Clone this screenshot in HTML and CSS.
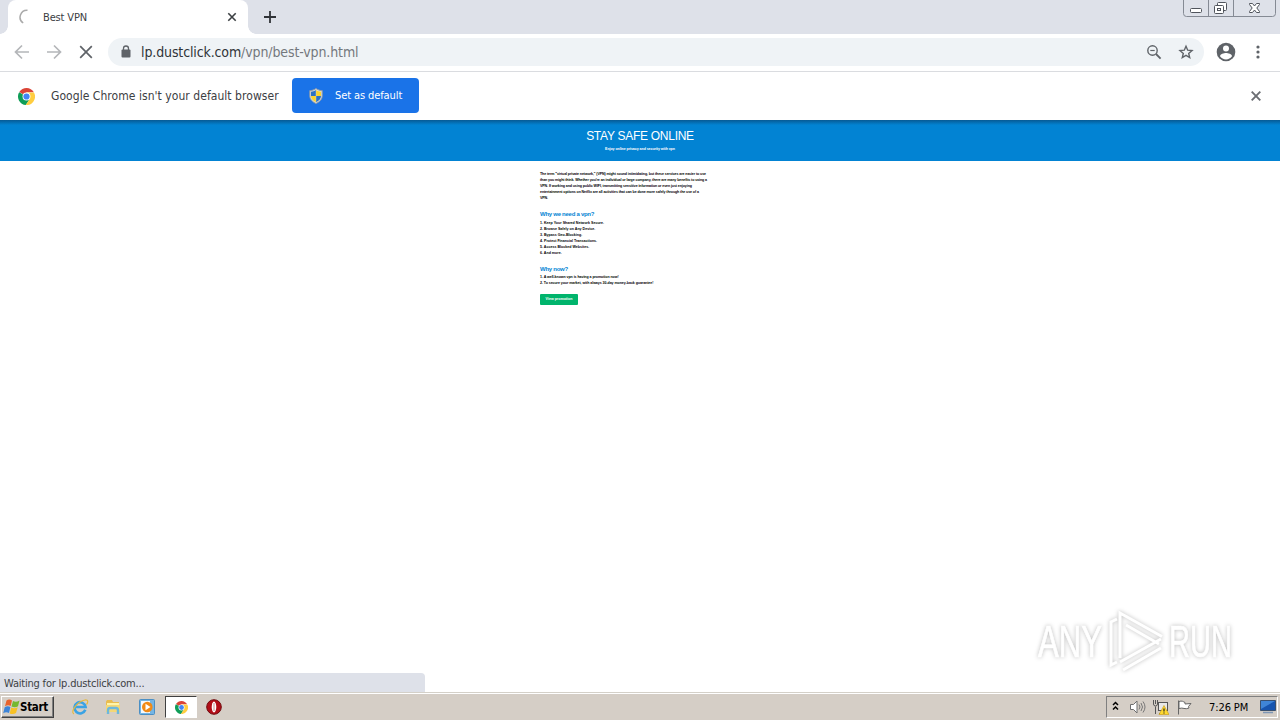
FILE: index.html
```html
<!DOCTYPE html>
<html lang="en">
<head>
    <meta charset="utf-8">
    <title>Best VPN</title>
    <link rel="stylesheet" href="styles.css">
</head>
<body>
    <svg width="0" height="0" class="defs">
        <symbol id="chrome" viewBox="0 0 18 18">
            <path fill="#db4437" d="M9 9 1.4 4.3A9 9 0 0 1 16.8 4.6H9z"/>
            <path fill="#0f9d58" d="M9 9 1.2 4.5A9 9 0 0 0 8.3 18L12.8 11z"/>
            <path fill="#ffcd40" d="M9 4.7h7.9A9 9 0 0 1 8.2 18L12.8 11z"/>
            <circle cx="9" cy="9" r="4.2" fill="#fff"/>
            <circle cx="9" cy="9" r="3.3" fill="#4285f4"/>
        </symbol>
    </svg>

    <div class="tabstrip">
        <div class="tab">
            <svg class="spinner" width="16" height="16" viewBox="0 0 16 16"><path d="M8.5 1.200A7 7 0 0 0 4.200 14" fill="none" stroke="#aaa" stroke-width="1.5"/></svg>
            <span class="tab-title">Best VPN</span>
            <svg width="10" height="10" viewBox="0 0 10 10"><path d="M1.300 1.300l7.400 7.400M8.700 1.300L1.300 8.700" stroke="#3c4043" stroke-width="1.600"/></svg>
        </div>
        <svg class="newtab" width="12" height="12" viewBox="0 0 12 12"><path d="M6 0v12M0 6h12" stroke="#303338" stroke-width="1.800"/></svg>
        <svg class="winbtns" width="94" height="18" viewBox="0 0 94 18">
            <path d="M.5 0v13.5a3 3 0 0 0 3 3h86a3 3 0 0 0 3-3V0M25.500 0v16M50.500 0v16" fill="none" stroke="#858a94"/>
            <rect x="7.500" y="8.500" width="11" height="4" rx="1" fill="#fff" stroke="#50545c"/>
            <rect x="34.500" y="2.500" width="9" height="8" rx="1" fill="#fff" stroke="#50545c"/>
            <rect x="31.500" y="5.500" width="9" height="8" rx="1" fill="#fff" stroke="#50545c"/>
            <rect x="34.500" y="8.500" width="3" height="2" fill="#fff" stroke="#50545c"/>
            <path d="M66.500 3.500h3l2 2.500 2-2.500h3v1L73.800 8l2.700 3.500v1h-3l-2-2.500-2 2.500h-3v-1L69.200 8l-2.700-3.500z" fill="#fff" stroke="#50545c"/>
        </svg>
    </div>

    <div class="toolbar">
        <svg class="nav" width="16" height="16" viewBox="0 0 16 16"><path d="M15 8H2M8 1.500L1.500 8 8 14.500" fill="none" stroke="#b4b6b9" stroke-width="1.700"/></svg>
        <svg class="nav" width="16" height="16" viewBox="0 0 16 16"><path d="M1 8h13M8 1.500L14.500 8 8 14.500" fill="none" stroke="#b4b6b9" stroke-width="1.700"/></svg>
        <svg class="nav" width="16" height="16" viewBox="0 0 16 16"><path d="M2.200 2.200l11.600 11.600M13.800 2.200L2.200 13.800" stroke="#5f6368" stroke-width="1.700"/></svg>
        <div class="omnibox">
            <svg width="10" height="13" viewBox="0 0 10 13"><path d="M2.500 5V3.500a2.500 2.500 0 0 1 5 0V5" fill="none" stroke="#5f6368" stroke-width="1.300"/><rect x=".5" y="4.600" width="9" height="7.900" rx="1" fill="#5f6368"/></svg>
            <span class="url"><b>lp.dustclick.com</b>/vpn/best-vpn.html</span>
            <svg class="zoom" width="16" height="16" viewBox="0 0 16 16"><circle cx="6.500" cy="6.500" r="4.700" fill="none" stroke="#5f6368" stroke-width="1.400"/><path d="M10 10l4.600 4.600" stroke="#5f6368" stroke-width="1.800"/><path d="M4.300 6.500h4.400" stroke="#5f6368" stroke-width="1.200"/></svg>
            <svg width="16" height="16" viewBox="0 0 16 16"><path d="M8 2.200l1.700 4 4.300.4-3.300 2.800 1 4.200L8 11.400l-3.700 2.200 1-4.200L2 6.600l4.300-.4z" fill="none" stroke="#5f6368" stroke-width="1.400"/></svg>
        </div>
        <svg class="avatar" width="20" height="20" viewBox="0 0 20 20"><circle cx="10" cy="10" r="9.300" fill="#5f6368"/><circle cx="10" cy="6.600" r="3" fill="#fff"/><path d="M4 14.200c0-2.100 4-3.200 6-3.200s6 1.100 6 3.200a7.200 7.200 0 0 1-12 0z" fill="#fff"/></svg>
        <svg width="4" height="14" viewBox="0 0 4 14"><g fill="#5f6368"><circle cx="2" cy="2" r="1.600"/><circle cx="2" cy="7" r="1.600"/><circle cx="2" cy="12" r="1.600"/></g></svg>
    </div>

    <div class="infobar">
        <svg class="logo" width="17" height="17"><use href="#chrome"/></svg>
        <span class="info-text">Google Chrome isn't your default browser</span>
        <div class="set-default">
            <svg width="14" height="16" viewBox="0 0 14 16">
                <path d="M7 .5C5 2 3 2.500.8 2.600V8c0 3.500 3 6 6.200 7.500C10.200 14 13.200 11.500 13.200 8V2.600C11 2.500 9 2 7 .5z" fill="#ddd" stroke="#8c9aa8"/>
                <path d="M6.800 2v6H2V3.700C4 3.600 5.500 3 6.800 2zM7.200 8H12c0 3-2.300 4.900-4.800 6.200z" fill="#2c71c4"/>
                <path d="M7.200 2v6H12V3.700C10 3.600 8.500 3 7.200 2zM6.800 8H2c0 3 2.300 4.900 4.800 6.200z" fill="#fbd32e"/>
            </svg>
            <span>Set as default</span>
        </div>
        <svg class="info-close" width="10" height="10" viewBox="0 0 10 10"><path d="M.7.7l8.600 8.600M9.300.7L.7 9.300" stroke="#6b6e73" stroke-width="1.900"/></svg>
    </div>

    <div class="page">
        <div class="hero">
            <h1>STAY SAFE ONLINE</h1>
            <p>Enjoy online privacy and security with vpn</p>
        </div>
        <div class="content">
            <p class="intro">The term "virtual private network," (VPN) might sound intimidating, but these services are easier to use<br>
            than you might think. Whether you're an individual or large company, there are many benefits to using a<br>
            VPN. If working and using public WIFI, transmitting sensitive information or even just enjoying<br>
            entertainment options on Netflix are all activities that can be done more safely through the use of a<br>
            VPN.</p>
            <h2>Why we need a vpn?</h2>
            <p>1. Keep Your Shared Network Secure.<br>
            2. Browse Safely on Any Device.<br>
            3. Bypass Geo-Blocking.<br>
            4. Protect Financial Transactions.<br>
            5. Access Blocked Websites.<br>
            6. And more.</p>
            <h2>Why now?</h2>
            <p class="reasons">1. A well-known vpn is having a promotion now!<br>
            2. To secure your market, with always 30-day money-back guarantee!</p>
            <a class="promo">View promotion</a>
        </div>
        <div class="status">Waiting for lp.dustclick.com...</div>
        <svg class="watermark" width="220" height="76" viewBox="0 0 220 76">
            <g class="mark">
                <text x="8" y="50" textLength="64" lengthAdjust="spacingAndGlyphs">ANY</text>
                <text x="139" y="50" textLength="63" lengthAdjust="spacingAndGlyphs">RUN</text>
                <path d="M90 51V6l42 23.500M96 18l33 19M87 12l-6 3v43l6-3M90 55l41-23M93 63l38-22"/>
            </g>
        </svg>
    </div>

    <div class="taskbar">
        <div class="start">
            <svg width="17" height="16" viewBox="0 0 17 16"><path fill="#e8632c" d="M3.500 1.500c2-1.500 4-1 5.500 0L7.700 7C6 6 4 6 2 7.300z"/><path fill="#76b82f" d="M10 2c2 1 4 1 6.500-.5L15 7.300c-2 1.400-4.500 1.200-6.500.2z"/><path fill="#3c84d8" d="M1.700 8.300c2-1.200 3.800-1.200 5.700-.2L6 14c-1.800-1-3.800-1-5.800.2z"/><path fill="#f8c124" d="M8.200 8.500c2 1 4.300 1 6.500-.3L13 14c-2 1.500-4.400 1.300-6.300.4z"/></svg>
            <span>Start</span>
        </div>
        <svg class="ie" width="18" height="18" viewBox="0 0 18 18"><path d="M14.300 11.800A5.600 5.600 0 1 1 14.600 9H4" fill="none" stroke="#3ba3e4" stroke-width="2.600"/><path d="M3 16C-1.500 14 7 3 14 2c4-.4 2.800 3 1.500 4.500" fill="none" stroke="#e6b93c" stroke-width="1.200"/></svg>
        <svg class="explorer" width="16" height="16" viewBox="0 0 16 16"><path d="M1 2.500l1-1.500h5l1 2h6v5H1z" fill="#e9bc4f"/><path d="M2 4h12v6H2z" fill="#fff4a8"/><path d="M1 6h14v7H1z" fill="#f4d776"/><path d="M3 15V11.500Q3 9 5 9h6q2 0 2 2.500V15" fill="none" stroke="#6db8dc" stroke-width="2.400"/></svg>
        <svg class="media" width="16" height="16" viewBox="0 0 16 16"><rect x=".5" y=".5" width="15" height="15" rx="1" fill="#74b5e4" stroke="#4b8fc4"/><rect x="2" y="2" width="9" height="12" fill="#f5f9fd"/><circle cx="8.300" cy="8" r="5.300" fill="#f18a16"/><path d="M6.500 4.800L11.500 8l-5 3.200z" fill="#fff"/></svg>
        <div class="active-task"><svg width="13" height="13"><use href="#chrome"/></svg></div>
        <svg class="opera" width="16" height="16" viewBox="0 0 16 16"><circle cx="8" cy="8" r="7.300" fill="#b20d17" stroke="#6f0a0e"/><ellipse cx="8" cy="8" rx="2.300" ry="5.400" fill="#fff"/><path d="M8 4v8" stroke="#ddb2b2" stroke-width="1.500"/></svg>
        <div class="tray">
            <svg class="expand" width="7" height="10" viewBox="0 0 7 10"><path d="M1 4l2.500-2.500L6 4M1 8.500L3.500 6 6 8.500" fill="none" stroke="#000" stroke-width="1.500"/></svg>
            <svg class="volume" width="17" height="16" viewBox="0 0 17 16"><path d="M1.500 5.500h3L8 2v12l-3.500-3.500h-3z" fill="#fff" stroke="#6e6e6e"/><path d="M10 5.500q2 2.500 0 5M12 4q3 4 0 8M14 2.500q4 5.500 0 11" fill="none" stroke="#777"/></svg>
            <svg class="network" width="16" height="16" viewBox="0 0 16 16"><rect x="5.500" y="3.500" width="9" height="8" fill="#e8e8e8" stroke="#555"/><path d="M2.500 15V7.500M.5 1v4q0 2 2 2t2-2V1M2.500 1v4M6 14.500h5" fill="none" stroke="#555"/><path d="M11 6.500l5 9H6z" fill="#ffd92f" stroke="#c79813" stroke-width=".6"/><path d="M11 9.500v3M11 13.500v1" stroke="#222" stroke-width="1.200"/></svg>
            <svg class="flag" width="17" height="16" viewBox="0 0 17 16"><path d="M2.500 15.500V1.500M3 2.500c3-1 4 0 6 1v1.500l6-.5-2.500 3 .5 1.500c-4 2-6-1-10 .5z" fill="#fff" stroke="#666"/></svg>
            <span class="clock">7:26 PM</span>
            <svg width="16" height="14" viewBox="0 0 16 14"><path d="M.5.5h15v10H.5z" fill="#1754ae" stroke="#39506f"/><path d="M1 1h14L1 9z" fill="#3f85d7"/><path d="M3 12.500h10" stroke="#7e96b4" stroke-width="1.500"/></svg>
        </div>
    </div>
</body>
</html>
```
FILE: styles.css
```css
body {
    margin: 0;
    width: 1280px;
    height: 720px;
    overflow: hidden;
    display: flex;
    flex-direction: column;
    background: #fff;
    font-family: "DejaVu Sans Condensed", "DejaVu Sans", sans-serif;
    font-size: 11px;
    color: #3c4043;
}
svg {
    flex: none;
    display: block;
}
.defs {
    position: absolute;
}
span {
    white-space: nowrap;
}

/* browser window */
.tabstrip {
    height: 34px;
    flex: none;
    display: flex;
    background: #dee1e9;
}
.tab {
    position: relative;
    box-sizing: border-box;
    width: 240px;
    margin-left: 8px;
    padding: 0 11px;
    display: flex;
    align-items: center;
    background: #fff;
    border-radius: 8px 8px 0 0;
}
.tab::before, .tab::after {
    content: "";
    position: absolute;
    bottom: 0;
    width: 8px;
    height: 8px;
}
.tab::before {
    left: -8px;
    background: radial-gradient(circle at 0 0, transparent 7.5px, #fff 8px);
}
.tab::after {
    right: -8px;
    background: radial-gradient(circle at 100% 0, transparent 7.5px, #fff 8px);
}
.tab-title {
    flex: 1;
    margin-left: 8px;
    letter-spacing: -0.15px;
}
.newtab {
    margin: 11px 0 0 16px;
}
.winbtns {
    margin-left: auto;
    margin-right: 3px;
}
.toolbar {
    box-sizing: border-box;
    height: 38px;
    flex: none;
    padding: 0 20px 2px 14px;
    display: flex;
    align-items: center;
    border-bottom: 1px solid #dadce0;
}
.nav {
    margin-right: 16px;
}
.omnibox {
    box-sizing: border-box;
    height: 28px;
    flex: 1;
    margin-left: -2px;
    padding: 0 10px 0 13px;
    display: flex;
    align-items: center;
    border-radius: 14px;
    background: #eff3f6;
}
.url {
    margin-left: 10px;
    font-size: 14px;
    letter-spacing: -0.12px;
    color: #74787d;
}
.url b {
    font-weight: normal;
    color: #303338;
}
.zoom {
    margin-left: auto;
    margin-right: 16px;
}
.avatar {
    margin: 0 20px 0 12px;
}
.infobar {
    box-sizing: border-box;
    height: 48px;
    flex: none;
    display: flex;
    align-items: center;
    padding: 0 19px 1px 18px;
}
.logo {
    margin-top: 1px;
}
.info-text {
    width: 229px;
    margin: 0 12px 0 16px;
    font-size: 12px;
    letter-spacing: 0.05px;
}
.set-default {
    box-sizing: border-box;
    width: 127px;
    height: 35px;
    padding-left: 17px;
    display: flex;
    align-items: center;
    gap: 12px;
    border-radius: 4px;
    background: #1a73e8;
    color: #fff;
    letter-spacing: -0.1px;
}
.info-close {
    margin-left: auto;
    margin-top: 1px;
}

/* page, zoomed out to 25% */
.page {
    position: relative;
    flex: 1;
    font-family: "Liberation Sans", Arial, sans-serif;
    line-height: 6px;
    color: #000;
}
.hero {
    box-sizing: border-box;
    height: 41px;
    padding-top: 8px;
    background: linear-gradient(#075a94, #0283d3 5px);
    color: #fff;
    text-align: center;
}
.hero h1 {
    margin: 0;
    font-size: 12px;
    line-height: 16px;
    font-weight: normal;
    letter-spacing: -0.27px;
}
.hero p {
    margin: 2px 0 0;
    font-weight: bold;
    font-size: 3.6px;
    letter-spacing: -0.07px;
}
.content {
    width: 200px;
    margin: 10px 0 0 540px;
    font-weight: bold;
    font-size: 3.6px;
    white-space: nowrap;
}
.content p {
    margin: 0;
}
.content .intro {
    letter-spacing: -0.1px;
}
.content h2 {
    margin: 9px 0 1px;
    font-size: 6px;
    line-height: 9px;
    letter-spacing: -0.27px;
    color: #0283d3;
}
.content .reasons {
    margin-top: -1px;
    letter-spacing: -0.07px;
}
.promo {
    display: block;
    width: 38px;
    height: 11px;
    margin-top: 8px;
    line-height: 11px;
    border-radius: 1px;
    background: #00b46c;
    color: #fff;
    text-align: center;
}
.status {
    position: absolute;
    left: 0;
    bottom: 0;
    box-sizing: border-box;
    width: 425px;
    height: 19px;
    padding-left: 4px;
    border-radius: 0 4px 0 0;
    background: #dee1e9;
    font: 11px/21px "DejaVu Sans Condensed", "DejaVu Sans", sans-serif;
    letter-spacing: -0.2px;
    color: #3c4043;
}
.watermark {
    position: absolute;
    left: 1030px;
    top: 487px;
}
.mark {
    fill: #fff;
    filter: drop-shadow(0 0 2px #bbb);
    font: 44px "Liberation Sans", Arial, sans-serif;
}
.mark text {
    stroke: #fff;
    stroke-width: 0.7;
}
.mark path {
    fill: none;
    stroke: #fff;
    stroke-width: 3;
}

/* desktop taskbar */
.taskbar {
    box-sizing: border-box;
    height: 28px;
    flex: none;
    display: flex;
    align-items: center;
    padding: 1px 2px 0 1px;
    border-top: 1px solid #d4d0c8;
    box-shadow: inset 0 1px #fff;
    background: #d5cec6;
    color: #000;
}
.start {
    box-sizing: border-box;
    width: 53px;
    height: 22px;
    padding-left: 1px;
    display: flex;
    align-items: center;
    border: 1px solid;
    border-color: #fff #404040 #404040 #fff;
    box-shadow: inset -1px -1px #808080;
    font-weight: bold;
    font-size: 11.5px;
    letter-spacing: -0.3px;
}
.ie {
    margin-left: 17px;
}
.explorer {
    margin-left: 16px;
}
.media {
    margin-left: 18px;
}
.active-task {
    box-sizing: border-box;
    width: 32px;
    height: 22px;
    margin-left: 10px;
    display: flex;
    align-items: center;
    justify-content: center;
    border: 1px solid;
    border-color: #404040 #fff #fff #404040;
    background: #fff;
}
.opera {
    margin-left: 9px;
}
.tray {
    box-sizing: border-box;
    width: 172px;
    height: 22px;
    margin-left: auto;
    padding: 0 1px 0 5px;
    display: flex;
    align-items: center;
    border: 1px solid;
    border-color: #808080 #fff #fff #808080;
}
.expand {
    margin-bottom: 3px;
}
.volume {
    margin-left: 10px;
}
.network {
    margin-left: 7px;
}
.flag {
    margin-left: 7px;
}
.clock {
    flex: 1;
    margin-left: 16px;
    letter-spacing: -0.1px;
}
```
